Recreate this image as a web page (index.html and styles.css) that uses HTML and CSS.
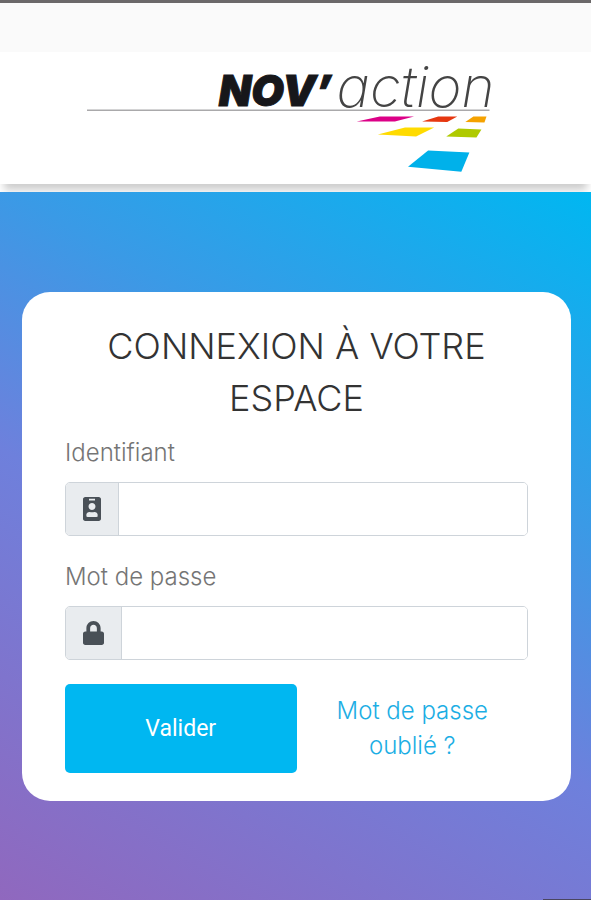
FILE: index.html
```html
<!DOCTYPE html>
<html lang="fr">
<head>
<meta charset="utf-8">
<meta name="viewport" content="width=device-width, initial-scale=1">
<title>Nov'action – Connexion</title>
<link rel="stylesheet" href="styles.css">
</head>
<body>
<div class="status-bar"></div>
<header class="site-header">
  <svg class="logo" viewBox="0 0 417 131" role="img" aria-label="Nov'action">
    <path d="M1 58H401" stroke="#aaa9ab" stroke-width="1.5"/>
    <text class="logo-bold" x="132" y="54">NOV’</text>
    <text class="logo-thin" x="249" y="55">action</text>
    <path fill="#dc0087" d="M269 69L292 64H326L307 69Z"/>
    <path fill="#e63710" d="M334 69L350 64H369L359 69.500Z"/>
    <path fill="#f5a200" d="M377 69.500L385 64H398L396 70Z"/>
    <path fill="#ffdb00" d="M290 82L317 75H346L328 84Z"/>
    <path fill="#afca00" d="M358 84L370 76L393 77L388 85Z"/>
    <path fill="#00b1ea" d="M320 114L340 98L381 100L373 119Z"/>
  </svg>
</header>
<main class="page">
  <form class="card">
    <h1 class="title">CONNEXION À VOTRE ESPACE</h1>
    <label class="label" for="login">Identifiant</label>
    <div class="field">
      <span class="addon">
        <svg class="icon-badge" viewBox="0 0 384 512" aria-hidden="true"><path fill="currentColor" d="M336 0H48C21.500 0 0 21.500 0 48v416c0 26.500 21.500 48 48 48h288c26.500 0 48-21.500 48-48V48c0-26.500-21.500-48-48-48zM128 36h128v36h-128zM192 128c42 0 74 32 74 74s-32 74-74 74-74-32-74-74 32-74 74-74zm120 276.800c0 10.600-10 19.200-22.400 19.200H94.400C82 424 72 415.400 72 404.800v-29.200c0-31.800 30.100-57.600 67.200-57.600h5c12.300 5.100 31.700 8 47.800 8s35.600-2.900 47.800-8h5c37.100 0 67.200 25.800 67.200 57.600v29.200z"/></svg>
      </span>
      <input class="input" id="login" name="login" type="text">
    </div>
    <label class="label" for="password">Mot de passe</label>
    <div class="field">
      <span class="addon">
        <svg class="icon-lock" viewBox="0 0 448 512" aria-hidden="true"><path fill="currentColor" d="M400 224h-24v-72C376 68.200 307.800 0 224 0S72 68.200 72 152v72H48c-26.500 0-48 21.500-48 48v192c0 26.500 21.500 48 48 48h352c26.500 0 48-21.500 48-48V272c0-26.500-21.500-48-48-48zm-104 0H152v-72c0-39.700 32.300-72 72-72s72 32.300 72 72v72z"/></svg>
      </span>
      <input class="input" id="password" name="password" type="password">
    </div>
    <div class="actions">
      <button class="submit" type="submit">Valider</button>
      <a class="forgot" href="#">Mot de passe oublié ?</a>
    </div>
  </form>
  <div class="corner-bar"></div>
</main>
</body>
</html>
```
FILE: styles.css
```css
* {
  box-sizing: border-box;
}

body {
  display: flex;
  flex-direction: column;
  min-height: 100vh;
  margin: 0;
  background: #fff;
  font-family: Inter, "Open Sans", sans-serif;
}

.status-bar {
  height: 52px;
  border-top: 3px solid #6b6869;
  background: #fafafa;
}

.site-header {
  display: flex;
  justify-content: center;
  margin-bottom: 8px;
  background: #fff;
  box-shadow: 0 10px 8px -4px rgba(0, 0, 0, 0.2);
}

.logo {
  display: block;
  width: 71%;
  overflow: visible;
}

.logo-bold {
  font-size: 42px;
  font-style: italic;
  font-weight: 900;
  fill: #17171a;
  stroke: #17171a;
  stroke-width: 1px;
}

.logo-thin {
  font-size: 56px;
  font-style: italic;
  font-weight: 200;
  fill: #444;
}

.page {
  position: relative;
  flex: 1;
  padding: 100px 20px 99px 22px;
  background: linear-gradient(30deg, #9068be 0%, #6e80dc 43%, #3a9ae6 68%, #00b7f1 100%);
}

.corner-bar {
  position: absolute;
  right: 0;
  bottom: 0;
  width: 48px;
  height: 1px;
  background: #4a4660;
}

.card {
  padding: 28px 43px;
  border-radius: 28px;
  background: #fff;
}

.title {
  margin: 0 0 12px;
  color: #333;
  font-size: 36px;
  font-weight: 300;
  line-height: 52px;
  text-align: center;
}

.label {
  display: block;
  margin-bottom: 12px;
  color: #757575;
  font-size: 24px;
  font-weight: 300;
  line-height: 34px;
}

.field {
  display: flex;
  height: 54px;
  margin-bottom: 24px;
  overflow: hidden;
  border: 1px solid #ced4da;
  border-radius: 5px;
}

.addon {
  display: flex;
  align-items: center;
  padding: 0 17px;
  border-right: 1px solid #ced4da;
  background: #e9ecef;
  color: #495057;
}

.icon-badge {
  width: 18px;
  height: 24px;
}

.icon-lock {
  width: 21px;
  height: 24px;
}

.input {
  flex: 1;
  min-width: 0;
  padding: 0 16px;
  border: 0;
  outline: 0;
  background: #fff;
  font: inherit;
  font-size: 24px;
}

.actions {
  display: grid;
  grid-template-columns: 1fr 1fr;
  align-items: center;
}

.submit {
  height: 89px;
  border: 0;
  border-radius: 5px;
  background: #00b7f1;
  color: #fff;
  font-family: Roboto, sans-serif;
  font-size: 23px;
}

.forgot {
  padding: 0 36px;
  color: #1caee4;
  font-size: 24px;
  font-weight: 300;
  line-height: 35px;
  text-align: center;
  text-decoration: none;
}
```
